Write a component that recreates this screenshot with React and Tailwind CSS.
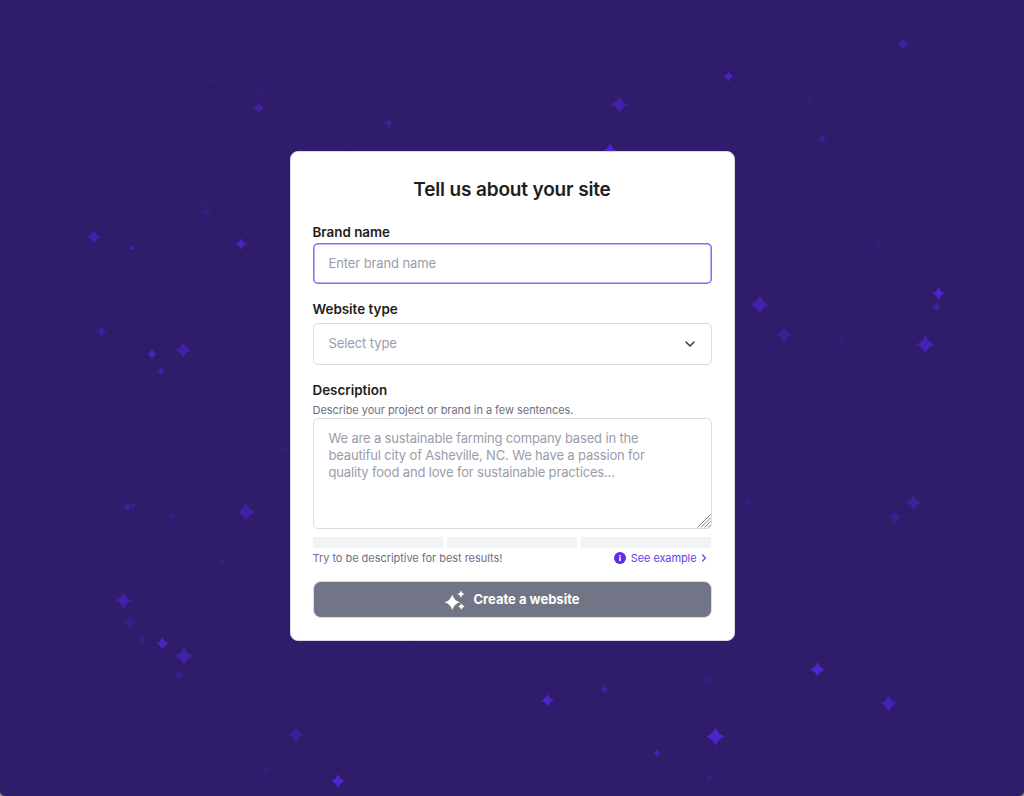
import React from "react";
import { ChevronDown, ChevronRight } from "lucide-react";

const stars = [
  [212,80,6,.3],[262,94,14,.1],[259,108,12,.55],[105,126,4,.3],[202,143,5,.25],[205,204,10,.12],[206,211,11,.25],[94,237,14,.6],[132,248,6,.7],[242,229,10,.08],[241,244,12,.8],[133,304,5,.15],[113,318,4,.25],[101,331,11,.5],[152,354,10,.85],[183,350,16,.6],[161,371,10,.5],
  [283,449,8,.2],[127,506,9,.5],[133,505,6,.4],[172,516,11,.2],[246,512,18,.55],[222,561,8,.25],[125,569,4,.12],[263,576,5,.08],[152,585,7,.1],[123,600,17,.6],[130,622,14,.3],[142,640,6,.4],[162,643,13,.85],[184,656,18,.65],[179,675,10,.4],[223,636,5,.07],[260,652,8,.06],[296,735,16,.45],[266,770,9,.2],[120,794,6,.2],
  [903,44,12,.6],[728,76,11,.8],[746,90,6,.12],[809,101,10,.12],[889,127,12,.1],[822,138,9,.4],[951,152,6,.25],[878,245,12,.15],[938,293,13,.95],[937,307,10,.55],[759,304,19,.65],[784,335,16,.4],[841,339,11,.2],[925,344,19,.7],
  [924,447,4,.3],[748,501,13,.2],[768,495,4,.1],[913,502,15,.5],[895,517,14,.35],[758,534,4,.3],[933,568,5,.2],[817,669,15,1],[888,703,17,.7],[749,686,4,.15],[872,759,4,.15],
  [476,83,8,.1],[385,112,4,.15],[389,123,10,.5],[350,144,5,.2],[619,104,17,.65],[610,152,18,1],
  [411,647,4,.2],[565,670,12,.08],[494,685,8,.05],[547,700,13,1],[604,689,9,.55],[707,680,16,.15],[695,663,6,.06],[715,736,19,.95],[657,753,8,.7],[709,777,9,.3],[338,781,14,1],[660,700,5,.05],
];

function Star({ x, y, s, o }) {
  return (
    <svg className="absolute" viewBox="0 0 24 24" width={s} height={s} style={{ left: x - s / 2, top: y - s / 2, opacity: o }}>
      <path d="M12 0Q15 9 24 12Q15 15 12 24Q9 15 0 12Q9 9 12 0Z" fill="#5025d1" />
    </svg>
  );
}

function Sparkles() {
  return (
    <svg viewBox="0 0 24 24" width="22" height="22" fill="#fff" aria-hidden="true">
      <path d="M9 6Q11 13 17.5 14.5Q11 16 9 23Q7 16 0.5 14.5Q7 13 9 6Z" />
      <path d="M18.5 1.5Q19.3 4.7 22.5 5.5Q19.3 6.3 18.5 9.5Q17.7 6.3 14.5 5.5Q17.7 4.7 18.5 1.5Z" />
      <path d="M19 15.5Q19.8 18.2 22.5 19Q19.8 19.8 19 22.5Q18.2 19.8 15.5 19Q18.2 18.2 19 15.5Z" />
    </svg>
  );
}

function Info() {
  return (
    <svg viewBox="0 0 12 12" width="12" height="12" aria-hidden="true">
      <circle cx="6" cy="6" r="6" fill="#5f2eea" />
      <rect x="5.2" y="5.2" width="1.6" height="3.8" fill="#fff" />
      <rect x="5.2" y="3" width="1.6" height="1.5" fill="#fff" />
    </svg>
  );
}

function Grip() {
  return (
    <svg className="absolute right-[1px] bottom-[1px] pointer-events-none" viewBox="0 0 14 14" width="14" height="14" stroke="#77798a" strokeWidth="1" aria-hidden="true">
      <path d="M0.5 13.5L13.5 0.5M4 13.5L13.5 4M7.5 13.5L13.5 7.5M11 13.5L13.5 11" />
    </svg>
  );
}

export default function App() {
  return (
    <div className="bg-[#8a8a8a] h-[796px] overflow-hidden font-['Inter','Liberation_Sans',sans-serif]">
      <div className="relative h-[796px] overflow-hidden rounded-b-[5px] bg-[#2f1c6a] flex items-center justify-center pb-[4px]">
        {stars.map(([x, y, s, o], i) => (
          <Star key={i} x={x} y={y} s={s} o={o} />
        ))}
        <div className="relative w-[445px] h-[490px] rounded-lg bg-white border border-[#d8d8e4] px-[22px] pt-[24px] flex flex-col">
          <h1 className="text-[19px] leading-[28px] font-semibold text-[#1d1e20] text-center tracking-[-0.15px]">Tell us about your site</h1>

          <label className="mt-[18px] text-[13.4px] leading-[20px] font-semibold text-[#1d1e20]">Brand name</label>
          <div className="mt-[1px] h-[41px] w-full rounded-[5px] shadow-[inset_0_0_0_1.5px_#8a68f5] px-[16px] flex items-center">
            <input
              placeholder="Enter brand name"
              className="w-full border-0 text-[13px] text-[#1d1e20] placeholder:text-[#9a9cab] outline-none tracking-[-0.1px]"
            />
          </div>

          <label className="mt-[15px] text-[13.4px] leading-[20px] font-semibold text-[#1d1e20]">Website type</label>
          <div className="mt-[4px] h-[42px] w-full rounded-[5px] border border-[#dadce0] pl-[15px] pr-[13px] flex items-center justify-between text-[13px] text-[#9a9cab] tracking-[-0.1px]">
            <span>Select type</span>
            <ChevronDown size={16} strokeWidth={2.2} className="text-[#36344d]" />
          </div>

          <label className="mt-[15px] text-[13.4px] leading-[20px] font-semibold text-[#1d1e20]">Description</label>
          <p className="mt-[2px] text-[11px] leading-[16px] text-[#6d7081] tracking-[-0.04px]">Describe your project or brand in a few sentences.</p>
          <div className="relative h-[111px]">
            <textarea
              placeholder="We are a sustainable farming company based in the beautiful city of Asheville, NC. We have a passion for quality food and love for sustainable practices..."
              className="h-[111px] w-full rounded-[5px] border border-[#dadce0] pl-[15px] pr-[30px] py-[11px] text-[13px] leading-[17px] text-[#1d1e20] placeholder:text-[#9a9cab] outline-none tracking-[-0.16px] resize-none block"
            />
            <Grip />
          </div>

          <div className="mt-[8px] grid grid-cols-3 gap-[4px] h-[11px]">
            <div className="bg-[#f2f3f6]" />
            <div className="bg-[#f2f3f6]" />
            <div className="bg-[#f2f3f6]" />
          </div>

          <div className="mt-[2px] h-[16px] flex items-center justify-between text-[11px] tracking-[-0.04px]">
            <span className="text-[#6d7081]">Try to be descriptive for best results!</span>
            <span className="flex items-center text-[#673de6] pr-[2px] tracking-[-0.1px]">
              <Info />
              <span className="ml-[5px]">See example</span>
              <ChevronRight size={12} strokeWidth={2.4} className="ml-[1px]" />
            </span>
          </div>

          <button className="mt-[15px] h-[37px] w-full rounded-[8px] bg-[#727586] border border-[#d8dae0] flex items-center justify-center gap-[7px] text-white text-[13px] font-bold">
            <Sparkles />
            Create a website
          </button>
        </div>
      </div>
    </div>
  );
}
